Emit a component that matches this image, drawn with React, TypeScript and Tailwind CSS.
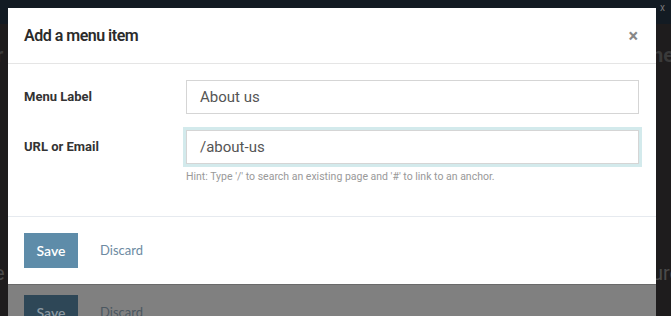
import React from "react";

export default function App() {
  return (
    <div className="relative w-[671px] h-[316px] overflow-hidden bg-[#1e1c1d]" style={{ fontFamily: "Roboto, 'Liberation Sans', sans-serif" }}>
      {/* backdrop */}
      <div className="absolute inset-x-0 top-0 h-[24px] bg-[#131b23]" />
      <div className="absolute left-[660px] top-[0px] text-[10px] text-[#777]">x</div>
      <div className="absolute left-[-4px] top-[40px] text-[20px] font-bold text-[#3a3a3a]">r</div>
      <div className="absolute left-[652px] top-[40px] text-[20px] font-bold text-[#3a3a3a]">he</div>
      <div className="absolute left-[-6px] top-[258px] text-[20px] text-[#4a4a4a]">e</div>
      <div className="absolute left-[652px] top-[258px] text-[20px] text-[#4a4a4a]">ure</div>

      <div className="relative flex flex-col pl-[8px] pt-[8px] w-[656px]">
        {/* modal */}
        <div className="bg-white flex flex-col">
          <div className="h-[56px] flex items-center justify-between px-[16px] border-b border-[#e5e5e5]">
            <div className="text-[16px] font-semibold text-[#2b2b2b] tracking-[-0.5px]">Add a menu item</div>
            <div className="text-[18px] font-bold text-[#888] leading-none pr-[2px]">×</div>
          </div>
          <div className="flex flex-col gap-[16px] pt-[16px] pl-[16px] pr-[17px] h-[152px]">
            <div className="flex items-start">
              <div className="w-[162px] h-[34px] flex items-center text-[13px] font-bold text-[#333]">Menu Label</div>
              <div className="flex-1 h-[34px] border border-[#d5d5d5] flex items-center px-[13px] text-[15px] text-[#555]">About us</div>
            </div>
            <div className="flex items-start">
              <div className="w-[162px] h-[34px] flex items-center text-[13px] font-bold text-[#333]">URL or Email</div>
              <div className="flex-1 flex flex-col">
                <div className="h-[34px] border border-[#d5d5d5] shadow-[0_0_0_3px_#d3eaec] flex items-center px-[13px] text-[15px] text-[#555]">/about-us</div>
                <div className="mt-[7px] text-[10.5px] text-[#999] leading-[12px]">Hint: Type '/' to search an existing page and '#' to link to an anchor.</div>
              </div>
            </div>
          </div>
          <div className="border-t border-[#e6eaef] h-[68px] flex items-center px-[16px] gap-[22px]" style={{ fontFamily: "Lato, 'Liberation Sans', sans-serif" }}>
            <div className="w-[54px] h-[35px] bg-[#5e8ca9] text-white text-[14px] font-semibold flex items-center justify-center">Save</div>
            <div className="text-[13px] text-[#6d8aa2]">Discard</div>
          </div>
        </div>
        {/* lower dimmed area */}
        <div className="h-[40px] bg-[#808080] border-t border-[#6a6a6a] flex items-start px-[16px] pt-[10px] gap-[22px]" style={{ fontFamily: "Lato, 'Liberation Sans', sans-serif" }}>
          <div className="w-[54px] h-[35px] bg-[#2e4757] text-[#8a97a0] text-[14px] font-semibold flex items-center justify-center">Save</div>
          <div className="text-[13px] text-[#4b5760] pt-[8px]">Discard</div>
        </div>
      </div>
    </div>
  );
}
